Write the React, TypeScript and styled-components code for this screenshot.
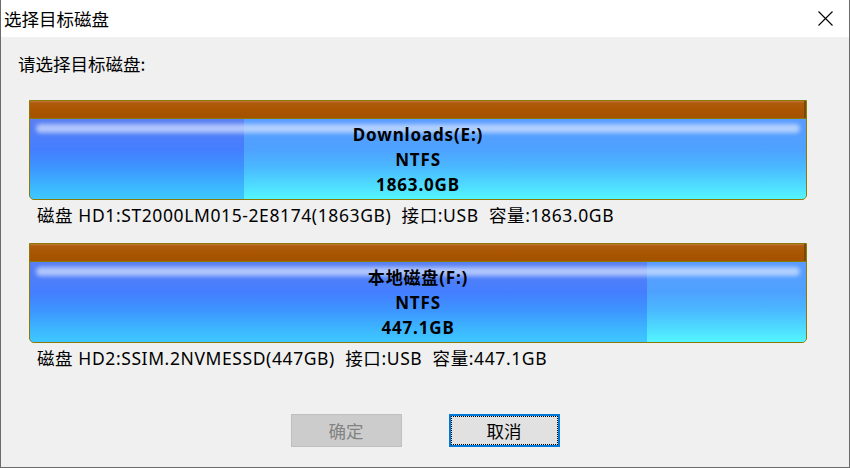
import styled, { createGlobalStyle } from "styled-components";

const GlobalStyle = createGlobalStyle`
  html, body {
    margin: 0;
    padding: 0;
    background: #ffffff;
  }
  body {
    font-family: "Noto Sans CJK SC", "Noto Sans", sans-serif;
  }
`;

const Window = styled.div`
  width: 850px;
  height: 468px;
  box-sizing: border-box;
  border-left: 1px solid #6b6b6b;
  border-right: 1px solid #6b6b6b;
  border-bottom: 1px solid #6b6b6b;
  background: #f0f0f0;
  display: flex;
  flex-direction: column;
`;

const TitleBar = styled.div`
  height: 37px;
  background: #ffffff;
  display: flex;
  align-items: center;
  justify-content: space-between;
  padding-left: 3px;
  padding-right: 14px;
`;

const Title = styled.span`
  font-size: 17.5px;
  color: #000;
  margin-top: -1px;
`;

const CloseButton = styled.button`
  width: 20px;
  height: 20px;
  border: none;
  background: transparent;
  padding: 0;
  display: flex;
  align-items: center;
  justify-content: center;
`;

const Body = styled.div`
  flex: 1;
  display: flex;
  flex-direction: column;
  padding: 17px 0 0 17px;
`;

const Prompt = styled.div`
  font-size: 17.5px;
  line-height: 20px;
  color: #000;
`;

const DiskList = styled.div`
  display: flex;
  flex-direction: column;
  gap: 18px;
  margin-top: 26px;
  margin-left: 11px;
`;

const DiskItem = styled.div`
  display: flex;
  flex-direction: column;
`;

const Bar = styled.div`
  width: 778px;
  height: 100px;
  box-sizing: border-box;
  border: 1px solid #8c7a06;
  border-radius: 0 0 5px 5px;
  display: flex;
  flex-direction: column;
  overflow: hidden;
  background: #8c7a06;
`;

const Cap = styled.div`
  height: 17px;
  background: linear-gradient(to bottom, #c27a3c 0px, #ae5c0c 2px, #a85400 60%, #a45200 100%);
  box-shadow: inset -2px 0 0 #7c4a06;
  border-bottom: 1px solid #8c7a06;
`;

const Track = styled.div`
  flex: 1;
  position: relative;
  display: flex;
`;

const Used = styled.div`
  background: linear-gradient(
    to bottom,
    #5a7ef2 0%,
    #447eff 38%,
    #3d94ff 60%,
    #3cb4ff 82%,
    #3ec8ff 100%
  );
`;

const Free = styled.div`
  flex: 1;
  background: linear-gradient(
    to bottom,
    #5a9aff 0%,
    #4ea2ff 38%,
    #4ab8ff 60%,
    #4edaff 82%,
    #54f6ff 100%
  );
`;

const Gloss = styled.div`
  position: absolute;
  top: 5px;
  left: 6px;
  right: 6px;
  height: 9px;
  border-radius: 5px;
  background: rgba(225, 235, 255, 0.66);
  filter: blur(2px);
`;

const Info = styled.div`
  position: absolute;
  inset: 0;
  display: flex;
  flex-direction: column;
  align-items: center;
  padding-top: 3px;
  font-family: "Noto Sans", "Noto Sans CJK SC", sans-serif;
  font-weight: 700;
  font-size: 17px;
  letter-spacing: 0.85px;
  line-height: 25px;
  color: #000;
`;

const Caption = styled.div`
  font-family: "Noto Sans", "Noto Sans CJK SC", sans-serif;
  font-size: 17.5px;
  letter-spacing: 0.6px;
  line-height: 20px;
  color: #000;
  margin-top: 5px;
  margin-left: 8px;
  white-space: pre;
`;

const Footer = styled.div`
  margin-top: auto;
  margin-bottom: 20px;
  display: flex;
  justify-content: center;
  gap: 47px;
  padding-right: 17px;
`;

const Button = styled.button<{ $focused?: boolean }>`
  width: 111px;
  height: 33px;
  box-sizing: border-box;
  font-family: "Noto Sans CJK SC", sans-serif;
  font-size: 17.5px;
  padding: 0;
  position: relative;
  background: ${(p) => (p.$focused ? "#e1e1e1" : "#cccccc")};
  border: ${(p) => (p.$focused ? "2px solid #0078d7" : "1px solid #bfbfbf")};
  color: ${(p) => (p.$focused ? "#000" : "#838383")};
  outline: ${(p) => (p.$focused ? "1px dotted #000" : "none")};
  outline-offset: -3px;
`;

type Disk = {
  name: string;
  fs: string;
  size: string;
  used: number;
  caption: string;
};

const disks: Disk[] = [
  {
    name: "Downloads(E:)",
    fs: "NTFS",
    size: "1863.0GB",
    used: 27.6,
    caption: "磁盘 HD1:ST2000LM015-2E8174(1863GB)  接口:USB  容量:1863.0GB",
  },
  {
    name: "本地磁盘(F:)",
    fs: "NTFS",
    size: "447.1GB",
    used: 79.5,
    caption: "磁盘 HD2:SSIM.2NVMESSD(447GB)  接口:USB  容量:447.1GB",
  },
];

export default function App() {
  return (
    <>
      <GlobalStyle />
      <Window>
        <TitleBar>
          <Title>选择目标磁盘</Title>
          <CloseButton aria-label="关闭">
            <svg width="15" height="15" viewBox="0 0 15 15">
              <path d="M0.5 0.5 L14.5 14.5 M14.5 0.5 L0.5 14.5" stroke="#000" strokeWidth="1.1" />
            </svg>
          </CloseButton>
        </TitleBar>
        <Body>
          <Prompt>请选择目标磁盘:</Prompt>
          <DiskList>
            {disks.map((d) => (
              <DiskItem key={d.name}>
                <Bar>
                  <Cap />
                  <Track>
                    <Used style={{ width: `${d.used}%` }} />
                    <Free />
                    <Gloss />
                    <Info>
                      <span>{d.name}</span>
                      <span>{d.fs}</span>
                      <span>{d.size}</span>
                    </Info>
                  </Track>
                </Bar>
                <Caption>{d.caption}</Caption>
              </DiskItem>
            ))}
          </DiskList>
          <Footer>
            <Button disabled>确定</Button>
            <Button $focused>取消</Button>
          </Footer>
        </Body>
      </Window>
    </>
  );
}
